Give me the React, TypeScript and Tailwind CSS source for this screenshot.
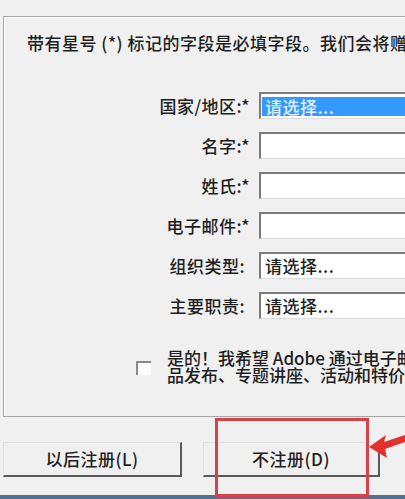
import React from 'react';

const rows = [
  { label: '国家/地区:*', value: '请选择...', selected: true },
  { label: '名字:*' },
  { label: '姓氏:*' },
  { label: '电子邮件:*' },
  { label: '组织类型:', value: '请选择...', pad: true },
  { label: '主要职责:', value: '请选择...', pad: true },
];

const App: React.FC = () => {
  return (
    <div className="relative w-[405px] h-[499px] overflow-hidden bg-[#f0f0f0] text-[#1e1e1e] font-['Noto_Sans_CJK_SC',sans-serif] text-[17px] font-medium tracking-[0.5px]">
      <div className="pt-[16px] pl-[3px]">
        {/* form group box */}
        <div className="w-[470px] h-[401px] border border-[#a8a8a8] shadow-[inset_1px_1px_0_#ffffff]">
          <p className="pt-[16px] pl-[23px] leading-[20px] whitespace-nowrap">
            带有星号 (*) 标记的字段是必填字段。我们会将赠送的资料发送给您
          </p>

          <div className="mt-[39px] flex flex-col gap-[13px]">
            {rows.map((row) => (
              <div key={row.label} className="flex items-center h-[27px]">
                <span className={`w-[246px] shrink-0 text-right leading-[20px] whitespace-nowrap ${row.pad ? 'pr-[5px]' : ''}`}>
                  {row.label}
                </span>
                <div className="ml-[9px] flex-1 h-[27px] bg-white border-t-2 border-l-2 border-r border-b border-t-[#7c7c7c] border-l-[#7c7c7c] border-r-[#dcdcdc] border-b-[#dcdcdc] flex items-center">
                  {row.selected ? (
                    <div className="ml-[1px] h-[19px] flex-1 bg-[#3399ff] text-[#e2efff] leading-[19px] pl-[3px] whitespace-nowrap">
                      {row.value}
                    </div>
                  ) : row.value ? (
                    <span className="pl-[4px] leading-[20px] whitespace-nowrap">{row.value}</span>
                  ) : null}
                </div>
              </div>
            ))}
          </div>

          <div className="mt-[30px] flex pl-[132px]">
            <div className="shrink-0 mt-[12px] w-[15px] h-[14px] bg-white border-t-2 border-l-2 border-t-[#8a8a8a] border-l-[#8a8a8a]" />
            <div className="ml-[16px] leading-[17px] whitespace-nowrap tracking-normal">
              <div>是的！我希望 Adobe 通过电子邮件向我发送有关产</div>
              <div>品发布、专题讲座、活动和特价优惠的信息。</div>
            </div>
          </div>
        </div>
      </div>

      <div className="mt-[25px] flex">
        <button className="ml-[3px] w-[179px] h-[35px] bg-[#f0f0f0] border-t border-l border-t-[#e2e2e2] border-l-[#e2e2e2] border-r-2 border-b-2 border-r-[#5a5a5a] border-b-[#5a5a5a] text-[#222]">
          以后注册(L)
        </button>
        <button className="ml-[21px] w-[177px] h-[35px] bg-[#f0f0f0] border-t border-l border-t-[#e2e2e2] border-l-[#e2e2e2] border-r-2 border-b-2 border-r-[#5a5a5a] border-b-[#5a5a5a] text-[#222]">
          不注册(D)
        </button>
      </div>

      <div className="mt-[18px] h-[4px] bg-[#54708e]" />

      {/* annotation: red box + arrow */}
      <div className="absolute left-[215px] top-[418px] w-[154px] h-[79px] border-[3px] border-[#d8414a]" />
      <svg className="absolute left-[365px] top-[426px]" width="40" height="36" viewBox="0 0 40 36">
        <polygon points="4,21 21,9 19,16 40,9 40,16 20,23 22,32" fill="#e3302f" />
      </svg>
    </div>
  );
};

export default App;
